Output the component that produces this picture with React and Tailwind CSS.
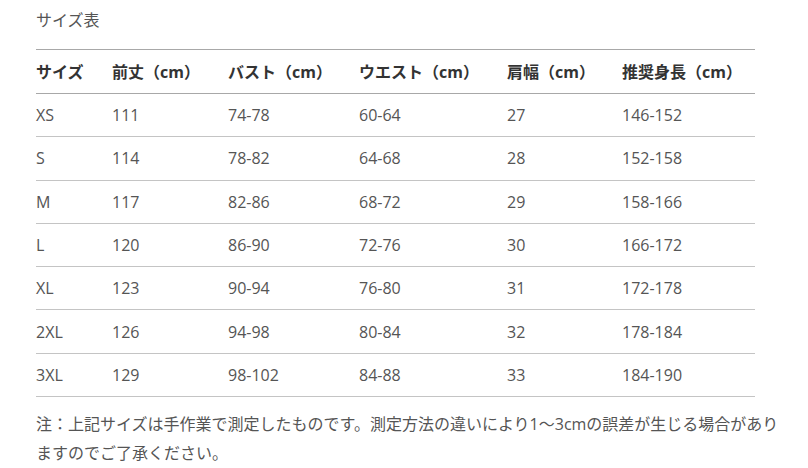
import React from 'react';

const headers = ['サイズ', '前丈（cm）', 'バスト（cm）', 'ウエスト（cm）', '肩幅（cm）', '推奨身長（cm）'];

const rows = [
    ['XS', '111', '74-78', '60-64', '27', '146-152'],
    ['S', '114', '78-82', '64-68', '28', '152-158'],
    ['M', '117', '82-86', '68-72', '29', '158-166'],
    ['L', '120', '86-90', '72-76', '30', '166-172'],
    ['XL', '123', '90-94', '76-80', '31', '172-178'],
    ['2XL', '126', '94-98', '80-84', '32', '178-184'],
    ['3XL', '129', '98-102', '84-88', '33', '184-190'],
];

const colWidths = ['w-[76px]', 'w-[116px]', 'w-[131px]', 'w-[148px]', 'w-[115px]', 'w-[133px]'];

const App = () => {
    return (
        <div className="bg-white w-[808px] h-[468px] overflow-hidden pl-[36px] pt-[9px] text-[#555] text-[16px]" style={{ fontFamily: '"Open Sans", "Noto Sans CJK JP", sans-serif' }}>
            <div className="leading-[22px]">サイズ表</div>
            <table className="mt-[18px] w-[719px] border-collapse table-fixed text-left">
                <colgroup>
                    {colWidths.map((w, i) => (
                        <col key={i} className={w} />
                    ))}
                </colgroup>
                <thead>
                    <tr className="border-t border-b border-[#a8a8a8] h-[44px]">
                        {headers.map((h, i) => (
                            <th key={i} className="font-bold text-[#333] p-0 align-middle whitespace-nowrap">
                                {h}
                            </th>
                        ))}
                    </tr>
                </thead>
                <tbody>
                    {rows.map((row, index) => (
                        <tr key={index} className="border-b border-[#c4c4c4] h-[43.3px]">
                            {row.map((cell, i) => (
                                <td key={i} className="p-0 align-middle">
                                    {cell}
                                </td>
                            ))}
                        </tr>
                    ))}
                </tbody>
            </table>
            <p className="mt-[13px] w-[748px] leading-[29px]">
                注：上記サイズは手作業で測定したものです。測定方法の違いにより1～3cmの誤差が生じる場合がありますのでご了承ください。
            </p>
        </div>
    );
};

export default App;
